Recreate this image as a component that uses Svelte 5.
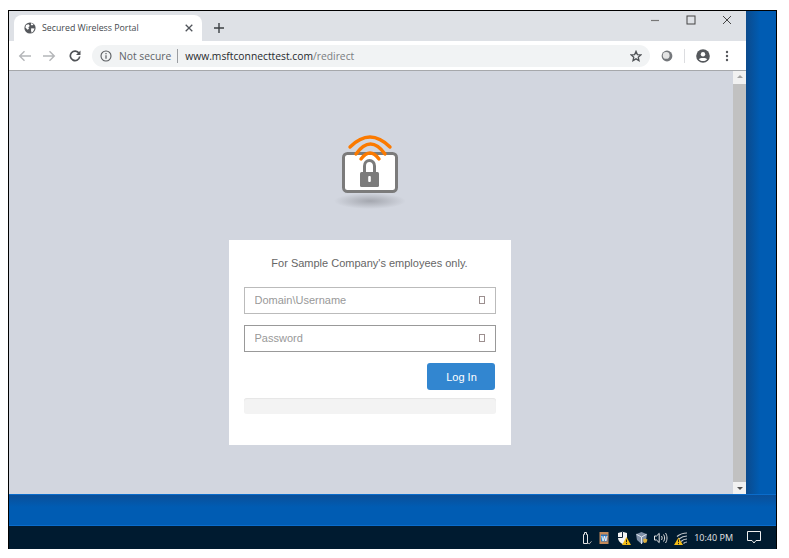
<script lang="ts">
	let username = $state('');
	let password = $state('');
</script>

<div class="screen">
	<div class="desktop">
		<div class="window">
			<div class="tabstrip">
				<div class="tab">
					<svg class="favicon" viewBox="0 0 12 12" width="12" height="12">
						<circle cx="6" cy="6" r="5.6" fill="#55585c" />
						<path d="M2 3 4.600 2.200 5.800 4 4.400 5.200 5 6.800 3.600 7.800 1.400 5.600zM7.400 1 9.600 2.600 8 3.600 6.800 2.800zM7.200 6.200 10.600 6.600 9.200 9.400 7.600 10.800 7 8.600z" fill="#fff" />
					</svg>
					<span class="tab-title">Secured Wireless Portal</span>
					<svg class="tab-close" viewBox="0 0 8 8" width="8" height="8">
						<path d="M.7.7l6.600 6.600M7.300.7.700 7.300" stroke="#50545a" stroke-width="1.300" fill="none" />
					</svg>
				</div>
				<svg class="newtab" viewBox="0 0 10 10" width="10" height="10">
					<path d="M5 0v10M0 5h10" stroke="#3c4043" stroke-width="1.400" fill="none" />
				</svg>
				<div class="winctl">
					<svg viewBox="0 0 10 10" width="10" height="10"><path d="M1 5.500h8" stroke="#777" stroke-width="1.200" /></svg>
					<svg viewBox="0 0 10 10" width="10" height="10"><rect x="1" y="1" width="8" height="8" fill="none" stroke="#444" /></svg>
					<svg viewBox="0 0 10 10" width="10" height="10"><path d="M1 1l8 8M9 1l-8 8" stroke="#444" fill="none" /></svg>
				</div>
			</div>

			<div class="toolbar">
				<svg class="nav" viewBox="0 0 14 12" width="14" height="12">
					<path d="M13 6H2M6.500 1.200 1.700 6l4.800 4.800" stroke="#b4b6b9" stroke-width="1.400" fill="none" />
				</svg>
				<svg class="nav" viewBox="0 0 14 12" width="14" height="12">
					<path d="M1 6h11M7.500 1.200 12.300 6l-4.800 4.800" stroke="#b4b6b9" stroke-width="1.400" fill="none" />
				</svg>
				<svg class="nav reload" viewBox="0 0 12 12" width="12" height="12">
					<path d="M10 3.300A4.700 4.700 0 1 0 10.700 6.500" stroke="#505357" stroke-width="1.700" fill="none" />
					<path d="M11.500 .4v4.500H7z" fill="#505357" />
				</svg>
				<div class="omnibox">
					<svg viewBox="0 0 12 12" width="12" height="12">
						<circle cx="6" cy="6" r="5" fill="none" stroke="#5a5d61" stroke-width="1.100" />
						<path d="M6 5.200v3.600M6 3v1.200" stroke="#5a5d61" stroke-width="1.200" />
					</svg>
					<span class="insecure">Not secure</span>
					<span class="sep"></span>
					<span class="url">www.msftconnecttest.com<span class="path">/redirect</span></span>
					<svg class="star" viewBox="0 0 14 14" width="12" height="12">
						<path d="M7 1.600 8.600 5.300l4 .4-3 2.700.9 4L7 10.300l-3.500 2.100.9-4-3-2.700 4-.4z" fill="none" stroke="#505357" stroke-width="1.500" />
					</svg>
				</div>
				<svg class="ext" viewBox="0 0 12 12" width="12" height="12">
					<circle cx="6" cy="6" r="5.400" fill="#75787c" />
					<circle cx="5.200" cy="5.400" r="3.400" fill="#e4e4e4" />
				</svg>
				<span class="toolsep"></span>
				<svg class="avatar" viewBox="0 0 14 14" width="14" height="14">
					<circle cx="7" cy="7" r="6.800" fill="#55585c" />
					<circle cx="7" cy="5.200" r="2.200" fill="#fff" />
					<path d="M2.800 10.200c1-1.700 7.400-1.700 8.400 0C10 11.600 8.500 12 7 12s-3-.4-4.200-1.800z" fill="#fff" />
				</svg>
				<svg class="dots" viewBox="0 0 4 12" width="4" height="12">
					<circle cx="2" cy="2" r="1.200" fill="#55585c" />
					<circle cx="2" cy="6" r="1.200" fill="#55585c" />
					<circle cx="2" cy="10" r="1.200" fill="#55585c" />
				</svg>
			</div>

			<div class="content">
				<main class="page">
					<svg class="logo" viewBox="0 0 80 76" width="80" height="76">
						<defs>
							<radialGradient id="floor">
								<stop offset="0" stop-color="#a4a7af" />
								<stop offset="1" stop-color="#d2d6df" />
							</radialGradient>
						</defs>
						<ellipse cx="40" cy="67" rx="36" ry="8" fill="url(#floor)" />
						<rect x="13.500" y="19.500" width="53" height="38" rx="4" fill="#fff" stroke="#7b7b7b" stroke-width="3" />
						<path d="M20 13Q40 -7 60 13M26 20Q40.500 0 55 20M31 25Q40 13 49 25" fill="none" stroke="#fb7a00" stroke-width="3.400" stroke-linecap="round" />
						<path d="M34.500 38v-6a5 5.500 0 0 1 10 0v6" fill="none" stroke="#7b7b7b" stroke-width="3" />
						<rect x="30" y="38" width="19" height="15" rx="1.500" fill="#7b7b7b" />
						<rect x="38.200" y="42" width="2.600" height="6" rx="1" fill="#fff" />
					</svg>

					<form class="card">
						<p class="notice">For Sample Company's employees only.</p>
						<label class="field light">
							<input type="text" placeholder="Domain\Username" bind:value={username} />
							<span class="tofu"></span>
						</label>
						<label class="field">
							<input type="password" placeholder="Password" bind:value={password} />
							<span class="tofu"></span>
						</label>
						<div class="actions">
							<button type="button">Log In</button>
						</div>
						<div class="progress"></div>
					</form>
				</main>
				<div class="scrollbar">
					<span class="arrow up"></span>
					<div class="thumb"></div>
					<span class="arrow down"></span>
				</div>
			</div>
		</div>
	</div>

	<div class="wallpaper"></div>

	<footer class="taskbar">
		<svg class="usb" viewBox="0 0 10 14" width="10" height="14">
			<path d="M1.500 3.500h1v-2h2v2h1v9h-4z" fill="none" stroke="#e6e6e6" />
			<path d="M6 12l1.200 1 2.300-2.700" fill="none" stroke="#aaa" />
		</svg>
		<svg class="word" viewBox="0 0 10 14" width="10" height="14">
			<rect x="0.500" y="1" width="9" height="12" fill="#c48a5a" />
			<rect x="2" y="3.500" width="6.500" height="7" fill="#2f73b8" />
			<text x="5.200" y="9.500" class="w">W</text>
		</svg>
		<svg class="shield" viewBox="0 0 14 14" width="14" height="14">
			<path d="M1 2 5.500 .8 10 2v5c0 3-2.500 5-4.500 6C3.500 12 1 10 1 7z" fill="#f4f4f4" />
			<path d="M5.500 1v5.500H1" stroke="#10243a" fill="none" />
			<path d="M9.500 6 14 14H5z" fill="#f3bc16" />
			<path d="M9.500 8.500v2.700M9.500 12v1.200" stroke="#222" />
		</svg>
		<svg class="box" viewBox="0 0 14 14" width="14" height="14">
			<path d="M6.500 1 12 3.200 11 9 6.500 13 2 9 1 3.200z" fill="#7f90a8" />
			<path d="M1.500 3.300 6.500 6l5-2.700M6.500 6v7" stroke="#dfe6ee" fill="none" />
			<path d="M8 8.500l2-1 2.500 1-1 3-2.500 .5z" fill="#dcb040" />
		</svg>
		<svg class="speaker" viewBox="0 0 14 14" width="14" height="14">
			<path d="M.5 5h2l2.700-2.600v9.200L2.500 9h-2z" fill="none" stroke="#e6e6e6" />
			<path d="M7.500 5c.8 1.200.8 2.800 0 4M9.500 3.500c1.500 2 1.500 5 0 7M11.500 2c2 3 2 7 0 10" fill="none" stroke="#dcdcdc" />
		</svg>
		<svg class="wifi" viewBox="0 0 14 14" width="14" height="14">
			<path d="M3 5.500C6 3 9.500 2 13 2M5 8C7.500 6 10.500 5 13 5M7 10.500C8.500 9 11 8 13 8M9.500 12.500C10.500 11.500 12 11 13 11" fill="none" stroke="#c4c8cc" stroke-width="1.200" />
			<path d="M4.500 6.500 9 14H0z" fill="#f3bc16" />
			<path d="M4.500 8.500v2.700M4.500 12v1.200" stroke="#222" />
		</svg>
		<span class="clock">10:40 PM</span>
		<svg class="notify" viewBox="0 0 14 13" width="14" height="13">
			<path d="M.5.500h13v9H9L7 12 5 9.500H.5z" fill="none" stroke="#eee" />
		</svg>
	</footer>
</div>

<style>
	:global(body) {
		background: #fff;
	}

	.screen {
		box-sizing: border-box;
		width: 769px;
		height: 539px;
		margin: 10px 0 0 8px;
		border: 1px solid #000;
		border-width: 1px 1px 0;
		display: flex;
		flex-direction: column;
		background: #005cb3;
	}

	.desktop {
		height: 483px;
		flex: none;
		background: linear-gradient(90deg, #0b4a8c 737px, #005cb3 751px);
	}

	.window {
		width: 737px;
		height: 100%;
		display: flex;
		flex-direction: column;
	}

	.tabstrip {
		height: 30px;
		flex: none;
		box-sizing: border-box;
		padding: 4px 0 0 5px;
		background: #dee1e6;
		display: flex;
		align-items: flex-start;
		font-family: 'Open Sans', sans-serif;
	}

	.tab {
		width: 188px;
		height: 26px;
		box-sizing: border-box;
		padding: 0 9px 0 10px;
		background: #fff;
		border-radius: 8px 8px 0 0;
		display: flex;
		align-items: center;
	}

	.tab-title {
		margin-left: 6px;
		flex: 1;
		font-size: 8.800px;
		color: #45494e;
		white-space: nowrap;
	}

	.newtab {
		margin: 8px 0 0 12px;
	}

	.winctl {
		margin-left: auto;
		display: flex;
		gap: 26px;
		padding: 0 14px 0 0;
	}

	.toolbar {
		height: 30px;
		flex: none;
		box-sizing: border-box;
		padding: 4px 13px 3px 9px;
		background: #fff;
		border-bottom: 1px solid #a6a8ab;
		display: flex;
		align-items: center;
	}

	.nav {
		margin-right: 10px;
	}

	.nav.reload {
		margin-right: 11px;
		margin-left: 3px;
	}

	.omnibox {
		flex: none;
		width: 558px;
		height: 22px;
		box-sizing: border-box;
		padding: 0 8px;
		border-radius: 11px;
		background: #f1f3f4;
		display: flex;
		align-items: center;
		font-family: 'Open Sans', sans-serif;
		font-size: 10.300px;
	}

	.insecure {
		margin-left: 7px;
		color: #5f6368;
	}

	.sep {
		width: 1px;
		height: 14px;
		margin: 0 7px 0 6px;
		background: #9a9da1;
	}

	.url {
		color: #26292c;
	}

	.path {
		color: #7a7d81;
	}

	.star {
		margin-left: auto;
	}

	.ext {
		margin-left: 11px;
	}

	.toolsep {
		width: 1px;
		height: 14px;
		margin: 0 11px 0 11px;
		background: #dcdde0;
	}

	.dots {
		margin-left: 15px;
	}

	.content {
		flex: 1;
		min-height: 0;
		display: flex;
	}

	.page {
		flex: 1;
		display: flex;
		flex-direction: column;
		align-items: center;
		background: #d2d6df;
		padding: 63px 3px 0 0;
	}

	.logo {
		display: block;
	}

	.card {
		box-sizing: border-box;
		width: 282px;
		height: 205px;
		margin-top: 30px;
		padding: 15px 15px 0;
		background: #fff;
		font-family: 'Liberation Sans', sans-serif;
	}

	.notice {
		margin: 0 0 16px;
		text-align: center;
		font-size: 11px;
		line-height: 16px;
		color: #666;
	}

	.field {
		height: 27px;
		box-sizing: border-box;
		margin-bottom: 11px;
		padding: 0 9px 2px 10px;
		border: 1px solid #999;
		display: flex;
		align-items: center;
	}

	.field.light {
		border-color: #bbb;
	}

	input {
		flex: 1;
		min-width: 0;
		padding: 0;
		border: 0;
		outline: 0;
		background: none;
		font-family: inherit;
		font-size: 11px;
		color: #555;
	}

	input::placeholder {
		color: #999;
	}

	.tofu {
		width: 6px;
		height: 8px;
		margin-right: 1px;
		border: 1px solid #9c8f8f;
		box-sizing: border-box;
	}

	.actions {
		display: flex;
		justify-content: flex-end;
		padding-right: 1px;
	}

	button {
		width: 68px;
		height: 27px;
		padding: 0 0 0 2px;
		border: 0;
		border-radius: 3px;
		background: #3286d0;
		color: #fff;
		font-family: inherit;
		font-size: 11px;
	}

	.progress {
		height: 16px;
		margin-top: 8px;
		border-radius: 3px;
		background: #f3f3f3;
		box-shadow: inset 0 1px 1px #e6e6e6;
	}

	.scrollbar {
		width: 13px;
		flex: none;
		background: #f1f1f1;
		display: flex;
		flex-direction: column;
		align-items: center;
	}

	.arrow {
		width: 0;
		height: 0;
		flex: none;
		border: 3px solid transparent;
	}

	.arrow.up {
		margin: 4px 0 3px;
		border-top: 0;
		border-bottom: 3px solid #a3a3a3;
	}

	.arrow.down {
		margin: 5px 0 4px;
		border-bottom: 0;
		border-top: 3px solid #505050;
	}

	.thumb {
		flex: 1;
		align-self: stretch;
		margin-top: 3px;
		background: #c1c1c1;
	}

	.wallpaper {
		flex: 1;
		background: linear-gradient(#0a4f99, #005cb3 12px);
		border-top: 1px solid #0a6ccb;
	}

	.taskbar {
		height: 24px;
		flex: none;
		box-sizing: border-box;
		border-top: 1px solid #0a6ccb;
		padding-right: 15px;
		background: #001b30;
		display: flex;
		align-items: center;
		justify-content: flex-end;
	}

	.word {
		margin-left: 7px;
	}

	.shield {
		margin-left: 8px;
	}

	.box {
		margin-left: 4px;
	}

	.speaker {
		margin-left: 5px;
	}

	.wifi {
		margin-left: 6px;
	}

	.w {
		font-family: 'Liberation Sans', sans-serif;
		font-size: 6.500px;
		font-weight: 700;
		fill: #fff;
		text-anchor: middle;
	}

	.clock {
		margin-left: 6px;
		font-family: 'Open Sans', sans-serif;
		font-size: 9px;
		color: #e6e6e6;
	}

	.notify {
		margin-left: 14px;
	}
</style>
